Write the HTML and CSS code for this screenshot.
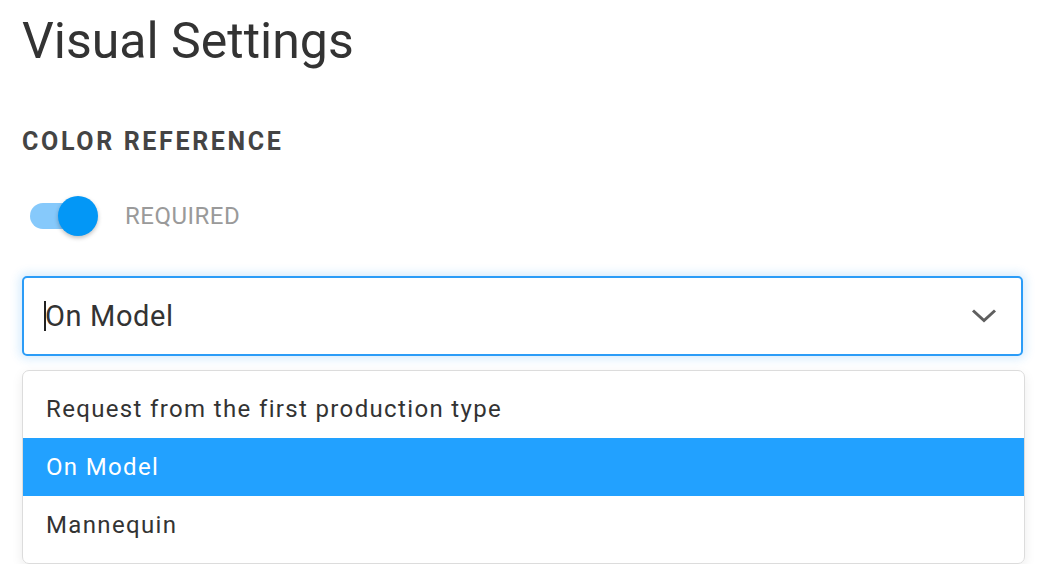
FILE: index.html
```html
<!DOCTYPE html>
<html>
<head>
<meta charset="utf-8">
<link rel="stylesheet" href="styles.css">
</head>
<body>
<div class="page">
  <h1 class="title">Visual Settings</h1>
  <h2 class="section">COLOR REFERENCE</h2>
  <div class="toggle-row">
    <div class="toggle"><div class="track"></div><div class="knob"></div></div>
    <span class="toggle-label">REQUIRED</span>
  </div>
  <div class="select">
    <span class="caret"></span><span class="value">On Model</span>
    <svg class="chevron" width="26" height="16" viewBox="0 0 26 16"><path d="M2 2.5 L13 12.5 L24 2.5" fill="none" stroke="#5f5f5f" stroke-width="3"/></svg>
  </div>
  <ul class="menu">
    <li class="item">Request from the first production type</li>
    <li class="item active">On Model</li>
    <li class="item">Mannequin</li>
  </ul>
</div>
</body>
</html>
```
FILE: styles.css
```css
html, body { margin: 0; padding: 0; background: #fff; }
body { font-family: Roboto, "Noto Sans", sans-serif; }
.page { padding: 0 39px 0 22px; display: flex; flex-direction: column; }
.title { margin: 0; padding-top: 11px; font-size: 50px; font-weight: 400; color: #333; line-height: 60px; }
.section { margin: 56px 0 0; font-size: 25px; font-weight: 700; letter-spacing: 2.65px; color: #444; line-height: 30px; }
.toggle-row { display: flex; align-items: center; margin-top: 37px; height: 44px; }
.toggle { position: relative; width: 80px; height: 44px; margin-left: 8px; }
.track { position: absolute; left: 0; top: 9px; width: 62px; height: 26px; border-radius: 13px; background: #86c9fb; }
.knob { position: absolute; left: 28px; top: 2px; width: 40px; height: 40px; border-radius: 50%; background: #0397f6; box-shadow: 0 2px 4px rgba(0,0,0,0.25); }
.toggle-label { margin-left: 15px; font-size: 24px; color: #9a9a9a; letter-spacing: 0.5px; }
.select { margin-top: 38px; height: 76px; border: 2px solid #2b9cf7; border-radius: 5px; box-shadow: 0 0 10px 3px rgba(33,150,243,0.18); display: flex; align-items: center; padding: 0 24px 0 20px; }
.caret { width: 2px; height: 30px; background: #222; margin-right: -1px; }
.value { flex: 1; font-size: 29px; letter-spacing: 0.6px; color: #333; }
.chevron { display: block; }
.menu { list-style: none; margin: 14px -2px 0 0; padding: 9px 0; border: 1px solid #dcdcdc; border-radius: 7px; box-shadow: 0 4px 12px rgba(0,0,0,0.08); }
.item { height: 58px; display: flex; align-items: center; padding-left: 23px; font-size: 24px; color: #333; letter-spacing: 1.35px; }
.item.active { background: #22a1ff; color: #fff; }
```
